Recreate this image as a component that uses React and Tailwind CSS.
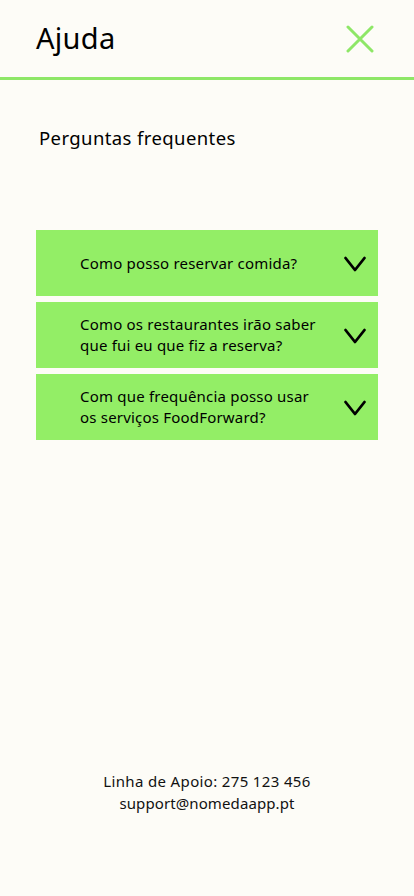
export default function App() {
  const items = [
    ["Como posso reservar comida?"],
    ["Como os restaurantes irão saber", "que fui eu que fiz a reserva?"],
    ["Com que frequência posso usar", "os serviços FoodForward?"],
  ];
  return (
    <div className="w-[414px] h-[896px] bg-[#fdfcf7] flex flex-col text-black" style={{ fontFamily: '"Noto Sans", Lato, sans-serif' }}>
      <div className="h-[77px] flex items-center justify-between pl-[36px] pr-[40px]">
        <span className="text-[29px] leading-none tracking-[0.3px] -mt-[2px]">Ajuda</span>
        <svg width="28" height="28" viewBox="0 0 28 28" className="mt-[1px]">
          <path d="M2 2 L26 26 M26 2 L2 26" stroke="#8ee767" strokeWidth="3" strokeLinecap="round" />
        </svg>
      </div>
      <div className="h-[3px] bg-[#8ee767]" />
      <div className="pl-[39px] mt-[46px] text-[18.5px] leading-[24px] tracking-[0.4px]">Perguntas frequentes</div>
      <div className="mt-[80px] mx-[36px] flex flex-col gap-[6px]">
        {items.map((lines, i) => (
          <div key={i} className="h-[66px] bg-[#93ee66] flex items-center pl-[44px] pr-[11px]">
            <div className="flex-1 text-[15px] leading-[21px] tracking-[0.2px]">
              {lines.map((l, j) => (
                <div key={j}>{l}</div>
              ))}
            </div>
            <svg width="24" height="18" viewBox="0 0 24 18" className="mt-[2px]">
              <path d="M2.5 3 L12 15 L21.5 3" stroke="#000" strokeWidth="2.8" fill="none" strokeLinecap="round" strokeLinejoin="round" />
            </svg>
          </div>
        ))}
      </div>
      <div className="mt-auto mb-[82px] text-center text-[15px] leading-[22px] text-[#111]">
        <div className="tracking-[0.35px]">Linha de Apoio: 275 123 456</div>
        <div className="tracking-[0.1px]">support@nomedaapp.pt</div>
      </div>
    </div>
  );
}
